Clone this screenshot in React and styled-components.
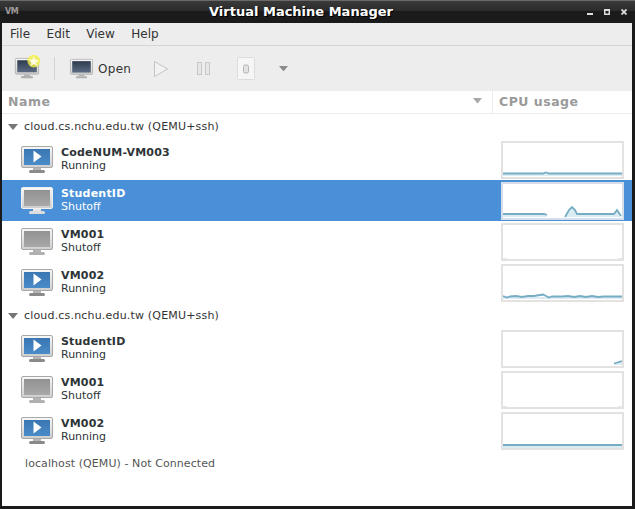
import React from 'react'
import styled, { createGlobalStyle } from 'styled-components'

const GlobalStyle = createGlobalStyle`
  html, body { margin: 0; padding: 0; background: #1a1a1a; }
  body { font-family: "DejaVu Sans", sans-serif; font-size: 11px; color: #2e3436; }
`

const Window = styled.div`
  width: 635px;
  height: 509px;
  box-sizing: border-box;
  display: flex;
  flex-direction: column;
  background: #1a1a1a;
  overflow: hidden;
`

const TitleBar = styled.div`
  height: 23px;
  flex: none;
  display: flex;
  align-items: center;
  padding: 0 8px 0 5px;
  color: #fff;
  background: linear-gradient(#6a6a6a 0, #6a6a6a 1px, #3a3a3a 1px, #2b2b2b 11px, #1b1b1b 11px, #1b1b1b 100%);
`

const AppBadge = styled.span`
  width: 14px;
  font-size: 8px;
  font-weight: bold;
  letter-spacing: -0.5px;
  color: #a09a9a;
`

const Title = styled.div`
  flex: 1;
  text-align: center;
  font-size: 13px;
  font-weight: bold;
  padding-right: 4px;
  text-shadow: 1px 1px 0 #000;
`

const WinButtons = styled.div`
  display: flex;
  align-items: center;
  gap: 11px;
`

const Content = styled.div`
  flex: 1;
  margin: 0 3px 3px 2px;
  display: flex;
  flex-direction: column;
  background: #fff;
`

const MenuBar = styled.div`
  height: 22px;
  flex: none;
  display: flex;
  align-items: center;
  gap: 16.5px;
  padding-left: 8px;
  background: #ededed;
  border-bottom: 1px solid #d6d6d6;
  font-size: 12px;
  color: #333;
`

const Toolbar = styled.div`
  height: 45px;
  flex: none;
  display: flex;
  align-items: center;
  padding-left: 13px;
  background: #ededed;
`

const ToolSep = styled.div`
  width: 1px;
  height: 23px;
  margin: 0 15px;
  background: #d4d4d4;
`

const OpenLabel = styled.span`
  font-size: 12px;
  letter-spacing: 0.3px;
  margin: 0 22px 0 5px;
  color: #333;
`

const Header = styled.div`
  height: 22px;
  flex: none;
  display: flex;
  border-bottom: 1px solid #ededed;
  color: #9a9a9a;
  font-weight: bold;
  font-size: 12.5px;
  letter-spacing: 0.5px;
`

const NameHead = styled.div`
  width: 491px;
  box-sizing: border-box;
  padding: 0 10px 2px 6px;
  display: flex;
  align-items: center;
  justify-content: space-between;
  border-right: 1px solid #ededed;
`

const CpuHead = styled.div`
  flex: 1;
  padding: 0 0 2px 6px;
  display: flex;
  align-items: center;
`

const Group = styled.div`
  height: 25px;
  display: flex;
  align-items: center;
  padding-left: 6px;
  gap: 6px;
  font-size: 11px;
  letter-spacing: 0.18px;
  color: #333;
`

const Row = styled.div`
  height: 41px;
  display: flex;
  align-items: center;
  padding-left: 19px;
  background: ${p => (p.$selected ? '#4a90d9' : '#fff')};
  color: ${p => (p.$selected ? '#fff' : '#2e3436')};
`

const VmText = styled.div`
  flex: 1;
  margin-left: 8px;
  padding-bottom: 2px;
  line-height: 13px;
  font-size: 11px;
`

const VmName = styled.div`
  font-weight: bold;
  letter-spacing: 0.2px;
`

const Graph = styled.div`
  width: 123px;
  height: 38px;
  box-sizing: border-box;
  margin-right: 8px;
  border: 2px solid ${p => (p.$selected ? '#d5deea' : '#e4e1e1')};
  background: #fff;
`

const Footer = styled.div`
  height: 22px;
  margin-top: 1px;
  padding-left: 23px;
  display: flex;
  align-items: center;
  font-size: 11px;
  letter-spacing: 0.08px;
  color: #555;
`

function Arrow({ color = '#777', size = 10 }) {
  return (
    <svg width={size} height={size * 0.6} viewBox="0 0 10 6">
      <path d="M0 0h10L5 6z" fill={color} />
    </svg>
  )
}

function Monitor({ running, selected, star, dark, w = 32, h = 28 }) {
  const screen = dark ? 'url(#scrDark)' : running ? 'url(#scrRun)' : 'url(#scrOff)'
  return (
    <svg width={w} height={h} viewBox="0 0 32 28" style={{ flex: 'none', overflow: 'visible' }}>
      <defs>
        <linearGradient id="scrRun" x1="0" y1="0" x2="0" y2="1">
          <stop offset="0" stopColor="#3a76b2" />
          <stop offset="1" stopColor="#4a8cc9" />
        </linearGradient>
        <linearGradient id="scrOff" x1="0" y1="0" x2="0" y2="1">
          <stop offset="0" stopColor="#929292" />
          <stop offset="1" stopColor="#a8a8a8" />
        </linearGradient>
        <linearGradient id="scrDark" x1="0" y1="0" x2="0" y2="1">
          <stop offset="0" stopColor="#2f3b4e" />
          <stop offset="1" stopColor="#5b6b82" />
        </linearGradient>
        <linearGradient id="frame" x1="0" y1="0" x2="0" y2="1">
          <stop offset="0" stopColor="#f8f8f8" />
          <stop offset="1" stopColor="#cecece" />
        </linearGradient>
      </defs>
      <rect x="0.5" y="0.5" width="31" height="21" rx="1.5" fill="url(#frame)" stroke={selected ? '#f0f0f0' : '#a8a8a8'} />
      <rect x="3" y="3" width="26" height="16" fill={screen} />
      {running && <path d="M12.5 4.5v12l8-6z" fill="#fff" />}
      <rect x="12" y="22" width="8" height="2" fill={selected ? '#e6e6e6' : '#b4b4b4'} />
      <rect x="8" y="24" width="16" height="3" rx="1.5" fill={selected ? '#dcdcdc' : running ? '#8a8a8a' : '#b0b0b0'} />
      {star && (
        <g>
          <circle cx="25" cy="4" r="8.5" fill="#f6f24a" opacity="0.8" />
          <path d="M25-2l2 4.3 4.6.5-3.4 3.1 1 4.6-4.2-2.4-4.2 2.4 1-4.6-3.4-3.1 4.6-.5z" fill="#fffde0" />
        </g>
      )}
    </svg>
  )
}

function Spark({ line, fill }) {
  return (
    <svg width="119" height="34" viewBox="0 0 119 34" style={{ display: 'block' }}>
      {fill && <path d={fill} fill="#dcecf3" />}
      {line && <path d={line} fill="none" stroke="#76adc4" strokeWidth="1.8" />}
    </svg>
  )
}

const graphs = {
  flat: { line: 'M0 30.5H40L43 29.5L46 30.5H119', fill: 'M0 31H119V33H0z' },
  student: {
    line: 'M0 30H41L44 31M62 33L66 26L69 23L72 26L74 30H111L114 26L118 32',
    fill: 'M0 30H41L44 33H0zM62 33L66 26L69 23L72 26L74 30H111L114 26L118 32V33z',
  },
  none: { fill: 'M0 33H4V34H0zM115 33H119V34H115z' },
  wavy: {
    line: 'M0 30L4 31.5L7 30.5L13 30L19 31L25 30L31 30L37 29L40 28.5L44 30.5L46 31.5L49 30.5L59 30.5L65 30L71 31L77 30L83 31L89 30L95 31L101 30.5L119 30.5',
    fill: 'M0 31H119V33H0z',
  },
  tail: { line: 'M111 31.5L119 29', fill: 'M111 33V31L119 28.5V33z' },
  steady: { line: 'M0 31H119', fill: 'M0 32H119V34H0z' },
}

function VmRow({ name, running, selected, graph }) {
  return (
    <Row $selected={selected}>
      <Monitor running={running} selected={selected} />
      <VmText>
        <VmName>{name}</VmName>
        <div>{running ? 'Running' : 'Shutoff'}</div>
      </VmText>
      <Graph $selected={selected}>
        <Spark {...graphs[graph]} />
      </Graph>
    </Row>
  )
}

const connections = [
  {
    vms: [
      { name: 'CodeNUM-VM003', running: true, graph: 'flat' },
      { name: 'StudentID', selected: true, graph: 'student' },
      { name: 'VM001', graph: 'none' },
      { name: 'VM002', running: true, graph: 'wavy' },
    ],
  },
  {
    vms: [
      { name: 'StudentID', running: true, graph: 'tail' },
      { name: 'VM001', graph: 'none' },
      { name: 'VM002', running: true, graph: 'steady' },
    ],
  },
]

export default function App() {
  return (
    <Window>
      <GlobalStyle />
      <TitleBar>
        <AppBadge>VM</AppBadge>
        <Title>Virtual Machine Manager</Title>
        <WinButtons>
          <svg width="6" height="6" viewBox="0 0 6 6"><path d="M0 4h6v2H0z" fill="#ddd" /></svg>
          <svg width="6" height="6" viewBox="0 0 6 6"><path d="M0 0h6v6H0zM1.500 2v2.500h3V2z" fill="#ddd" fillRule="evenodd" /></svg>
          <svg width="6" height="6" viewBox="0 0 6 6"><path d="M.5.5l5 5M5.500.5l-5 5" stroke="#ddd" strokeWidth="1.8" /></svg>
        </WinButtons>
      </TitleBar>
      <Content>
        <MenuBar>
          <span>File</span>
          <span>Edit</span>
          <span>View</span>
          <span>Help</span>
        </MenuBar>
        <Toolbar>
          <Monitor dark star w={24} h={21} />
          <ToolSep />
          <Monitor dark w={23} h={20} />
          <OpenLabel>Open</OpenLabel>
          <svg width="16" height="18" viewBox="0 0 16 18">
            <path d="M1.500 1.500v15l13-7.500z" fill="#f2f2f2" stroke="#c4c4c4" />
          </svg>
          <svg width="13" height="13" viewBox="0 0 13 13" style={{ marginLeft: 28 }}>
            <rect x="0.500" y="0.500" width="4" height="12" fill="#e6e6e6" stroke="#c8c8c8" />
            <rect x="8.500" y="0.500" width="4" height="12" fill="#e6e6e6" stroke="#c8c8c8" />
          </svg>
          <svg width="18" height="23" viewBox="0 0 18 23" style={{ marginLeft: 27 }}>
            <rect x="0.500" y="0.500" width="17" height="22" rx="1" fill="#f6f6f6" stroke="#dcdcdc" />
            <rect x="6.500" y="8" width="5" height="8" rx="1.500" fill="#e4e4e4" stroke="#b4b4b4" />
          </svg>
          <span style={{ display: 'flex', marginLeft: 24 }}>
            <Arrow color="#8a8a8a" size={9} />
          </span>
        </Toolbar>
        <Header>
          <NameHead>
            Name
            <Arrow color="#a8a8a8" size={9} />
          </NameHead>
          <CpuHead>CPU usage</CpuHead>
        </Header>
        {connections.map((conn, i) => (
          <div key={i}>
            <Group>
              <Arrow color="#777" />
              cloud.cs.nchu.edu.tw (QEMU+ssh)
            </Group>
            {conn.vms.map((vm, j) => (
              <VmRow key={j} {...vm} />
            ))}
          </div>
        ))}
        <Footer>localhost (QEMU) - Not Connected</Footer>
      </Content>
    </Window>
  )
}
